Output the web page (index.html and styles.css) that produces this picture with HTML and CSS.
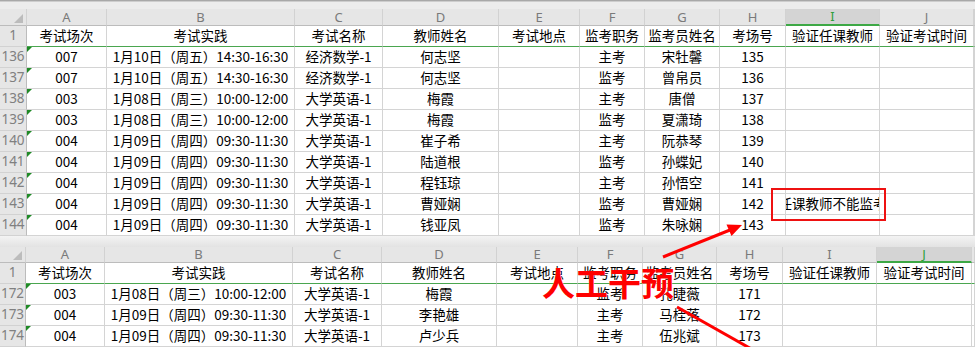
FILE: index.html
```html
<!DOCTYPE html>
<html lang="zh-CN">
<head>
<meta charset="utf-8">
<title>监考安排</title>
<link rel="stylesheet" href="styles.css">
</head>
<body>
<div class="app">
  <div class="toolbar-edge"></div>

  <div class="sheet sheet-top">
    <div class="ch corner"></div><div class="ch">A</div><div class="ch">B</div><div class="ch">C</div><div class="ch">D</div><div class="ch">E</div><div class="ch">F</div><div class="ch">G</div><div class="ch">H</div><div class="ch sel">I</div><div class="ch">J</div><div class="ch"></div>

    <div class="rh">1</div><div class="c hd">考试场次</div><div class="c hd">考试实践</div><div class="c hd">考试名称</div><div class="c hd">教师姓名</div><div class="c hd">考试地点</div><div class="c hd">监考职务</div><div class="c hd">监考员姓名</div><div class="c hd">考场号</div><div class="c hd">验证任课教师</div><div class="c hd">验证考试时间</div><div class="c hd"></div>

    <div class="rh">136</div><div class="c flag">007</div><div class="c">1月10日（周五）14:30-16:30</div><div class="c">经济数学-1</div><div class="c">何志坚</div><div class="c"></div><div class="c">主考</div><div class="c">宋牡馨</div><div class="c">135</div><div class="c"></div><div class="c"></div><div class="c"></div>

    <div class="rh">137</div><div class="c flag">007</div><div class="c">1月10日（周五）14:30-16:30</div><div class="c">经济数学-1</div><div class="c">何志坚</div><div class="c"></div><div class="c">监考</div><div class="c">曾帛员</div><div class="c">136</div><div class="c"></div><div class="c"></div><div class="c"></div>

    <div class="rh">138</div><div class="c flag">003</div><div class="c">1月08日（周三）10:00-12:00</div><div class="c">大学英语-1</div><div class="c">梅霞</div><div class="c"></div><div class="c">主考</div><div class="c">唐僧</div><div class="c">137</div><div class="c"></div><div class="c"></div><div class="c"></div>

    <div class="rh">139</div><div class="c flag">003</div><div class="c">1月08日（周三）10:00-12:00</div><div class="c">大学英语-1</div><div class="c">梅霞</div><div class="c"></div><div class="c">监考</div><div class="c">夏潇琦</div><div class="c">138</div><div class="c"></div><div class="c"></div><div class="c"></div>

    <div class="rh">140</div><div class="c flag">004</div><div class="c">1月09日（周四）09:30-11:30</div><div class="c">大学英语-1</div><div class="c">崔子希</div><div class="c"></div><div class="c">主考</div><div class="c">阮恭琴</div><div class="c">139</div><div class="c"></div><div class="c"></div><div class="c"></div>

    <div class="rh">141</div><div class="c flag">004</div><div class="c">1月09日（周四）09:30-11:30</div><div class="c">大学英语-1</div><div class="c">陆道根</div><div class="c"></div><div class="c">监考</div><div class="c">孙蝶妃</div><div class="c">140</div><div class="c"></div><div class="c"></div><div class="c"></div>

    <div class="rh">142</div><div class="c flag">004</div><div class="c">1月09日（周四）09:30-11:30</div><div class="c">大学英语-1</div><div class="c">程钰琼</div><div class="c"></div><div class="c">主考</div><div class="c">孙悟空</div><div class="c">141</div><div class="c"></div><div class="c"></div><div class="c"></div>

    <div class="rh">143</div><div class="c flag">004</div><div class="c">1月09日（周四）09:30-11:30</div><div class="c">大学英语-1</div><div class="c">曹娅娴</div><div class="c"></div><div class="c">监考</div><div class="c">曹娅娴</div><div class="c">142</div><div class="c">任课教师不能监考</div><div class="c"></div><div class="c"></div>

    <div class="rh">144</div><div class="c flag">004</div><div class="c">1月09日（周四）09:30-11:30</div><div class="c">大学英语-1</div><div class="c">钱亚凤</div><div class="c"></div><div class="c">监考</div><div class="c">朱咏娴</div><div class="c">143</div><div class="c"></div><div class="c"></div><div class="c"></div>
  </div>

  <div class="split"></div>

  <div class="sheet sheet-bottom">
    <div class="ch corner"></div><div class="ch">A</div><div class="ch">B</div><div class="ch">C</div><div class="ch">D</div><div class="ch">E</div><div class="ch">F</div><div class="ch">G</div><div class="ch">H</div><div class="ch">I</div><div class="ch sel">J</div><div class="ch"></div>

    <div class="rh">1</div><div class="c hd">考试场次</div><div class="c hd">考试实践</div><div class="c hd">考试名称</div><div class="c hd">教师姓名</div><div class="c hd">考试地点</div><div class="c hd">监考职务</div><div class="c hd">监考员姓名</div><div class="c hd">考场号</div><div class="c hd">验证任课教师</div><div class="c hd">验证考试时间</div><div class="c hd"></div>

    <div class="rh">172</div><div class="c flag">003</div><div class="c">1月08日（周三）10:00-12:00</div><div class="c">大学英语-1</div><div class="c">梅霞</div><div class="c"></div><div class="c">监考</div><div class="c">孔睫薇</div><div class="c">171</div><div class="c"></div><div class="c"></div><div class="c"></div>

    <div class="rh">173</div><div class="c flag">004</div><div class="c">1月09日（周四）09:30-11:30</div><div class="c">大学英语-1</div><div class="c">李艳雄</div><div class="c"></div><div class="c">主考</div><div class="c">马桂落</div><div class="c">172</div><div class="c"></div><div class="c"></div><div class="c"></div>

    <div class="rh">174</div><div class="c flag">004</div><div class="c">1月09日（周四）09:30-11:30</div><div class="c">大学英语-1</div><div class="c">卢少兵</div><div class="c"></div><div class="c">主考</div><div class="c">伍兆斌</div><div class="c">173</div><div class="c"></div><div class="c"></div><div class="c"></div>
  </div>

  <svg class="annot" width="975" height="347" viewBox="0 0 975 347" aria-hidden="true">
    <rect x="772" y="189" width="113" height="31" fill="none" stroke="#ee1111" stroke-width="2"/>
    <line x1="663" y1="257" x2="730" y2="230" stroke="#ff0000" stroke-width="3"/>
    <polygon points="742,225 731.5,236 726.5,224.5" fill="#ff0000"/>
    <line x1="677" y1="307" x2="762" y2="355" stroke="#ff0000" stroke-width="3"/>
  </svg>
  <div class="callout">人工干预</div>
</div>
</body>
</html>
```

FILE: styles.css
```css
* {
  box-sizing: border-box;
}

html,
body {
  margin: 0;
  padding: 0;
  background: #ffffff;
}

body {
  width: 975px;
  height: 347px;
  overflow: hidden;
  font-family: "Noto Sans CJK SC", "Noto Sans", sans-serif;
}

.app {
  position: relative;
  width: 975px;
  height: 347px;
  overflow: hidden;
}

.toolbar-edge {
  height: 9px;
  background: linear-gradient(#a8a8a8 0 1px, #cdcdcd 1px 2px, #ececec 2px);
}

.sheet {
  display: grid;
  grid-template-columns: 27px 80px 188px 88px 116px 81px 65px 75px 66px 94px 94px 1fr;
  grid-template-rows: 17px;
  grid-auto-rows: 21px;
}

.sheet-bottom {
  grid-template-columns: 26px 79px 188px 89px 115px 81px 65px 74px 66px 94px 95px 1fr;
  grid-template-rows: 16px;
}

.ch {
  display: flex;
  align-items: center;
  justify-content: center;
  background: #e6e6e6;
  border-right: 1px solid #d2d2d2;
  border-bottom: 1px solid #bcbcbc;
  color: #7a7a7a;
  font-family: "Noto Sans", sans-serif;
  font-size: 13px;
  line-height: 1;
}

.ch.sel {
  background: #d4d4d4;
  color: #2e9e3a;
  border-bottom: 2px solid #3da845;
}

.corner {
  position: relative;
}

.corner::after {
  content: "";
  position: absolute;
  right: 3px;
  bottom: 2px;
  border-left: 9px solid transparent;
  border-bottom: 9px solid #bcbcbc;
}

.rh {
  display: flex;
  align-items: center;
  justify-content: center;
  background: #e6e6e6;
  border-right: 1px solid #bcbcbc;
  border-bottom: 1px solid #d2d2d2;
  color: #808080;
  font-family: "Noto Sans", sans-serif;
  font-size: 13.5px;
  line-height: 1;
}

.c {
  display: flex;
  align-items: center;
  justify-content: center;
  white-space: nowrap;
  overflow: hidden;
  border-right: 1px solid #d4d4d4;
  border-bottom: 1px solid #d4d4d4;
  color: #000000;
  font-size: 13.5px;
  line-height: 1;
}

.c.hd {
  border-bottom-color: #4aa64f;
}

.c.flag {
  position: relative;
}

.c.flag::before {
  content: "";
  position: absolute;
  top: 0;
  left: 0;
  border-top: 5px solid #1f8a26;
  border-right: 5px solid transparent;
}

.split {
  height: 11px;
  background: linear-gradient(#f3f3f3, #e3e3e3);
}

.annot {
  position: absolute;
  top: 0;
  left: 0;
  pointer-events: none;
}

.callout {
  position: absolute;
  left: 542px;
  top: 266px;
  color: #ff0000;
  font-family: "Noto Sans CJK SC", sans-serif;
  font-weight: 700;
  font-size: 33px;
  line-height: 33px;
  white-space: nowrap;
  text-shadow: 0 0 1px #ffffff;
}
```
